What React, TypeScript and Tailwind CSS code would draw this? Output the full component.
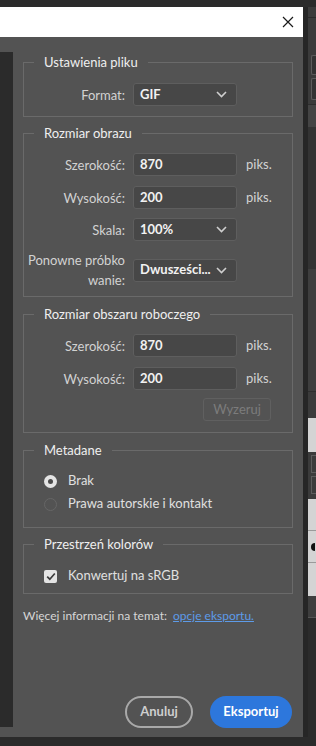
import React from 'react';

const font = { fontFamily: 'Lato, "Noto Sans", sans-serif' };

function Chevron() {
  return (
    <svg width="11" height="7" viewBox="0 0 11 7" className="shrink-0">
      <path d="M1 1 L5.5 5.5 L10 1" fill="none" stroke="#cfcfcf" strokeWidth="1.6" />
    </svg>
  );
}

function Select({ value }: { value: string }) {
  return (
    <div className="w-[104px] h-[23px] rounded-[3px] border border-[#5e5e5e] bg-[#474747] flex items-center justify-between pl-[6px] pr-[9px]">
      <span className="text-[13px] font-bold text-[#f2f2f2] whitespace-nowrap">{value}</span>
      <Chevron />
    </div>
  );
}

function Field({ value }: { value: string }) {
  return (
    <div className="w-[104px] h-[23px] rounded-[3px] border border-[#5e5e5e] bg-[#474747] flex items-center pl-[6px]">
      <span className="text-[13px] font-bold text-[#f2f2f2]">{value}</span>
    </div>
  );
}

function Row({ label, children, unit }: { label: React.ReactNode; children: React.ReactNode; unit?: string }) {
  return (
    <div className="flex items-center">
      <div className="w-[101px] text-right text-[13px] leading-[20px] text-[#d2d2d2] whitespace-nowrap">{label}</div>
      <div className="ml-[8px]">{children}</div>
      {unit && <span className="ml-[9px] text-[13px] text-[#d2d2d2]">{unit}</span>}
    </div>
  );
}

function Group({ title, className, children }: { title: string; className?: string; children: React.ReactNode }) {
  return (
    <fieldset className={`border border-[#6a6a6a] ${className ?? ''}`}>
      <legend className="ml-[10px] px-[10px] text-[13px] leading-[18px] text-[#efefef]">{title}</legend>
      {children}
    </fieldset>
  );
}

export default function App() {
  return (
    <div className="w-[316px] h-[746px] bg-[#2a2a2a] flex flex-col overflow-hidden select-none" style={font}>
      <div className="h-[7px] shrink-0 bg-[#2b2b2b]" />
      <div className="flex h-[730px]">
        {/* dialog */}
        <div className="w-[303px] flex flex-col">
          <div className="h-[30px] bg-white flex items-center justify-end pr-[9px]">
            <svg width="12" height="12" viewBox="0 0 12 12">
              <path d="M1 1 L11 11 M11 1 L1 11" stroke="#1a1a1a" strokeWidth="1.2" />
            </svg>
          </div>
          <div className="flex-1 bg-[#535353] flex pb-[9px]">
            <div className="w-[13px] mt-[15px] mb-[1px] bg-[#2b2b2b]" />
            <div className="flex-1 flex flex-col pl-[10px] pr-[10px] pt-[16px]">
              <Group title="Ustawienia pliku" className="pb-[10px]">
                <div className="mt-[12px]">
                  <Row label="Format:"><Select value="GIF" /></Row>
                </div>
              </Group>

              <Group title="Rozmiar obrazu" className="mt-[7px] pb-[6px]">
                <div className="mt-[11px] flex flex-col gap-[10px]">
                  <Row label="Szerokość:" unit="piks."><Field value="870" /></Row>
                  <Row label="Wysokość:" unit="piks."><Field value="200" /></Row>
                  <div className="-mt-[1px]">
                    <Row label="Skala:"><Select value="100%" /></Row>
                  </div>
                  <div className="-mt-[1px]">
                    <Row label={<>Ponowne próbko<br />wanie:</>}><Select value="Dwusześci..." /></Row>
                  </div>
                </div>
              </Group>

              <Group title="Rozmiar obszaru roboczego" className="mt-[8px] pb-[11px]">
                <div className="mt-[11px] flex flex-col gap-[10px]">
                  <Row label="Szerokość:" unit="piks."><Field value="870" /></Row>
                  <Row label="Wysokość:" unit="piks."><Field value="200" /></Row>
                </div>
                <div className="mt-[8px] flex justify-end pr-[21px]">
                  <div className="w-[68px] h-[23px] rounded-[3px] border border-[#606060] flex items-center justify-center text-[13px] text-[#7c7c7c]">
                    Wyzeruj
                  </div>
                </div>
              </Group>

              <Group title="Metadane" className="mt-[8px] pb-[13px]">
                <div className="mt-[12px] flex flex-col gap-[3px] pl-[20px]">
                  <div className="flex items-center h-[20px]">
                    <span className="w-[13px] h-[13px] rounded-full bg-[#e4e4e4] flex items-center justify-center">
                      <span className="w-[5px] h-[5px] rounded-full bg-[#4a4a4a]" />
                    </span>
                    <span className="ml-[11px] text-[13px] text-[#e0e0e0]">Brak</span>
                  </div>
                  <div className="flex items-center h-[20px]">
                    <span className="w-[13px] h-[13px] rounded-full border border-[#666666]" />
                    <span className="ml-[11px] text-[13px] text-[#e0e0e0]">Prawa autorskie i kontakt</span>
                  </div>
                </div>
              </Group>

              <Group title="Przestrzeń kolorów" className="mt-[7px] pb-[7px]">
                <div className="mt-[13px] flex items-center h-[20px] pl-[20px]">
                  <span className="w-[13px] h-[13px] rounded-[2px] bg-[#e4e4e4] flex items-center justify-center">
                    <svg width="10" height="9" viewBox="0 0 10 9">
                      <path d="M1.2 4.6 L3.8 7.2 L8.8 1.5" fill="none" stroke="#3c3c3c" strokeWidth="1.7" />
                    </svg>
                  </span>
                  <span className="ml-[11px] text-[13px] text-[#e0e0e0]">Konwertuj na sRGB</span>
                </div>
              </Group>

              <p className="mt-[13px] text-[12px] leading-[18px] text-[#d6d6d6] whitespace-nowrap">
                Więcej informacji na temat: <span className="ml-[3px] text-[#5d9be8] underline">opcje eksportu.</span>
              </p>

              <div className="mt-auto flex justify-end gap-[17px] pr-[1px]">
                <button className="w-[68px] h-[32px] rounded-full border-2 border-[#a9a9a9] text-[13px] font-bold text-[#cfcfcf]">
                  Anuluj
                </button>
                <button className="w-[82px] h-[32px] rounded-full bg-[#2d77dc] text-[13px] font-bold text-white">
                  Eksportuj
                </button>
              </div>
            </div>
          </div>
        </div>

        {/* background app strip */}
        <div className="w-[5px] bg-[#262626]" />
        <div className="w-[8px] flex flex-col bg-[#3b3b3b]">
          <div className="h-[11px] border-b border-[#2a2a2a]" />
          <div className="h-[37px]" />
          <div className="h-[20px] ml-[3px] rounded-l-[2px] border border-r-0 border-[#5c5c5c] bg-[#333333]" />
          <div className="h-[3px]" />
          <div className="h-[22px] ml-[3px] rounded-l-[2px] border border-r-0 border-[#5c5c5c] bg-[#333333]" />
          <div className="h-[5px] border-b border-[#2e2e2e]" />
          <div className="h-[22px] bg-[#444444]" />
          <div className="h-[142px] bg-[#333333]" />
          <div className="h-[123px] bg-[#3e3e3e] border-b border-[#2e2e2e]" />
          <div className="h-[26px] bg-[#3b3b3b]" />
          <div className="h-[34px] bg-[#d4d4d4]" />
          <div className="h-[47px] flex flex-col gap-[3px] pt-[3px] pl-[3px]">
            <div className="h-[18px] border border-r-0 border-[#5c5c5c]" />
            <div className="h-[18px] border border-r-0 border-[#5c5c5c]" />
          </div>
          <div className="h-[32px] bg-[#d4d4d4] border-b border-[#9a9a9a]" />
          <div className="h-[32px] bg-[#d4d4d4] border-b border-[#9a9a9a] flex items-center pl-[3px]">
            <span className="w-[4px] h-[8px] bg-[#111111] rounded-l-full" />
          </div>
          <div className="h-[33px] bg-[#d4d4d4]" />
          <div className="h-[22px] bg-[#3e3e3e] border-b border-[#555555]" />
          <div className="flex-1 bg-[#2b2b2b]" />
        </div>
      </div>
      <div className="flex-1 bg-[#2b2b2b]" />
    </div>
  );
}
